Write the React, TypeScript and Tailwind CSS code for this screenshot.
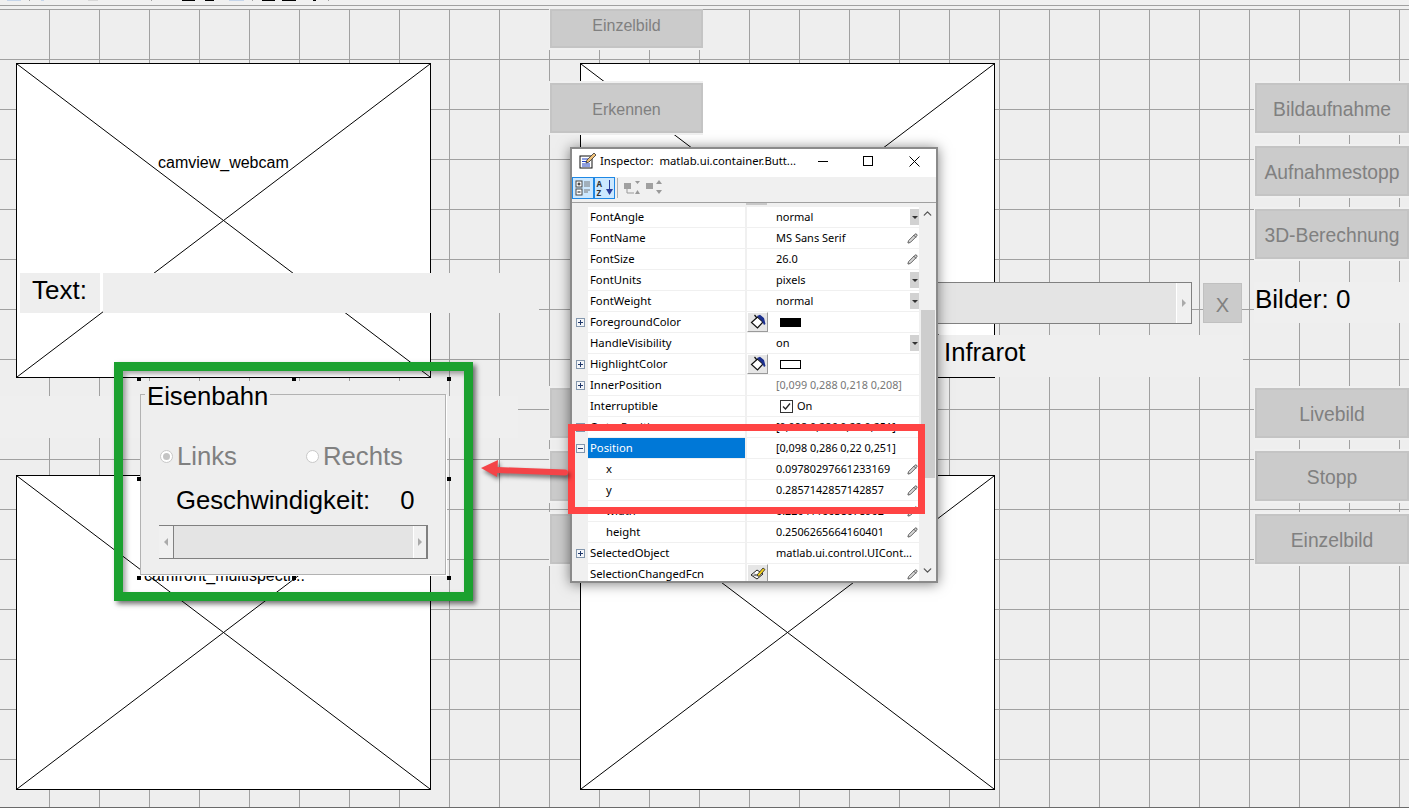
import React from "react";
import { ChevronDown, ChevronUp, Pencil } from "lucide-react";

// MATLAB GUIDE layout editor with the property inspector floating on top

const AxesBox = ({ className, label }: { className: string; label?: React.ReactNode }) => (
  <div className={`absolute w-[415px] h-[315px] bg-white border border-black ${className}`}>
    <svg className="absolute inset-0 w-full h-full" preserveAspectRatio="none" viewBox="0 0 100 100">
      <line x1="0" y1="0" x2="100" y2="100" stroke="#000" strokeWidth="1" vectorEffect="non-scaling-stroke" />
      <line x1="100" y1="0" x2="0" y2="100" stroke="#000" strokeWidth="1" vectorEffect="non-scaling-stroke" />
    </svg>
    {label}
  </div>
);

const GuideButton = ({ text, inner = "pt-[4px]", size = "text-[19.3px]" }: { text?: string; inner?: string; size?: string }) => (
  <div className="w-full h-[54px] shrink-0 bg-[#f0f0f0] py-[2px] pl-[1px]">
    <div className={`w-full h-full flex items-center justify-center bg-[#cbcbcb] border-2 border-[#c4c4c4] text-[#808080] ${size} ${inner}`}>
      {text}
    </div>
  </div>
);

const Handle = () => <div className="w-[4px] h-[4px] bg-black" />;

const ExpandBox = ({ minus }: { minus?: boolean }) => (
  <svg width="9" height="9" viewBox="0 0 9 9" className="block">
    <rect x="0.5" y="0.5" width="8" height="8" fill="#f4f6f9" stroke="#8497ad" />
    <line x1="2" y1="4.5" x2="7" y2="4.5" stroke="#20386b" />
    {!minus && <line x1="4.5" y1="2" x2="4.5" y2="7" stroke="#20386b" />}
  </svg>
);

const BucketButton = () => (
  <div className="w-[21px] h-[20px] bg-[#e6e6e6] border-t border-l border-t-white border-l-white border-r border-b border-r-[#9a9a9a] border-b-[#9a9a9a] flex items-center justify-center">
    <svg width="16" height="16" viewBox="0 0 16 16">
      <path d="M1.5 8.5 7.5 3l5.5 5-5.5 6z" fill="#fff" stroke="#111" strokeWidth="1.2" />
      <path d="M7 4 4.5 1" stroke="#111" strokeWidth="1.2" />
      <path d="M7 2 10 0.8l4 3.2 1.5 6-1.5 1-2-4z" fill="#1b2f8f" />
    </svg>
  </div>
);

const CallbackButton = () => (
  <div className="w-[21px] h-[20px] bg-[#e6e6e6] border-t border-l border-t-white border-l-white border-r border-b border-r-[#9a9a9a] border-b-[#9a9a9a] flex items-center justify-center">
    <svg width="16" height="16" viewBox="0 0 16 16">
      <path d="M1 9 7 4l6 4-6 5z" fill="#fff" stroke="#222" />
      <path d="M2.5 9 8 10M4 8l5 1.5" stroke="#555" strokeWidth="0.8" />
      <path d="M7 9 13 2l2 1.5L9 10.5z" fill="#f5d21f" stroke="#222" strokeWidth="0.8" />
    </svg>
  </div>
);

const PencilEdit = () => (
  <Pencil size={11} strokeWidth={1.8} className="absolute right-[1px] top-[5px] text-[#444]" fill="#d8d8d8" />
);

const Dropdown = () => (
  <div className="absolute right-0 top-[2px] w-[9px] h-[16px] bg-[#d2d2d2] flex items-center justify-center">
    <div className="w-0 h-0 border-x-[3px] border-x-transparent border-t-[3px] border-t-[#333]" />
  </div>
);

type Row = {
  name: string;
  value?: string;
  expand?: "plus" | "minus";
  kind?: "dropdown" | "pencil" | "color" | "muted" | "check" | "callback";
  swatch?: string;
  indent?: boolean;
  selected?: boolean;
};

const rows: Row[] = [
  { name: "FontAngle", value: "normal", kind: "dropdown" },
  { name: "FontName", value: "MS Sans Serif", kind: "pencil" },
  { name: "FontSize", value: "26.0", kind: "pencil" },
  { name: "FontUnits", value: "pixels", kind: "dropdown" },
  { name: "FontWeight", value: "normal", kind: "dropdown" },
  { name: "ForegroundColor", expand: "plus", kind: "color", swatch: "bg-black" },
  { name: "HandleVisibility", value: "on", kind: "dropdown" },
  { name: "HighlightColor", expand: "plus", kind: "color", swatch: "bg-white" },
  { name: "InnerPosition", value: "[0,099 0,288 0,218 0,208]", expand: "plus", kind: "muted" },
  { name: "Interruptible", value: "On", kind: "check" },
  { name: "OuterPosition", value: "[0,098 0,286 0,22 0,251]", expand: "plus" },
  { name: "Position", value: "[0,098 0,286 0,22 0,251]", expand: "minus", selected: true },
  { name: "x", value: "0.09780297661233169", kind: "pencil", indent: true },
  { name: "y", value: "0.2857142857142857", kind: "pencil", indent: true },
  { name: "width", value: "0.2204116638078902", kind: "pencil", indent: true },
  { name: "height", value: "0.2506265664160401", kind: "pencil", indent: true },
  { name: "SelectedObject", value: "matlab.ui.control.UICont...", expand: "plus" },
  { name: "SelectionChangedFcn", kind: "callback" },
];

const InspectorRow = ({ row }: { row: Row }) => {
  // numbers sit tighter than the rest in the reference
  const numeric = row.value ? /^[\[0]/.test(row.value) : false;
  return (
    <div className="flex h-[21px] shrink-0">
      <div className="w-[16px] shrink-0 bg-[#f0f0f0] flex items-center justify-center pl-[1px]">
        {row.expand && <ExpandBox minus={row.expand === "minus"} />}
      </div>
      <div
        className={`w-[157px] shrink-0 flex items-center border-b border-[#f0f0f0] text-[11.3px] ${
          row.selected ? "bg-[#0078d7] text-white" : "text-black"
        } ${row.indent ? "pl-[18px]" : "pl-[2px]"}`}
      >
        {row.name}
      </div>
      <div className="relative flex-1 flex items-center border-b border-l-2 border-[#f0f0f0]">
        {row.kind === "color" && (
          <>
            <BucketButton />
            <div className={`ml-[12px] w-[21px] h-[9px] border border-black ${row.swatch}`} />
          </>
        )}
        {row.kind === "callback" && <CallbackButton />}
        {row.kind === "check" && (
          <div className="ml-[33px] flex items-center gap-[4px]">
            <div className="w-[13px] h-[13px] border border-[#333] flex items-center justify-center">
              <svg width="11" height="11" viewBox="0 0 11 11">
                <path d="M2 5.5 4.5 8 9 2.5" fill="none" stroke="#222" strokeWidth="1.3" />
              </svg>
            </div>
            <span>{row.value}</span>
          </div>
        )}
        {row.value && row.kind !== "check" && (
          <span
            className={`pl-[29px] whitespace-nowrap ${numeric ? "text-[10.8px]" : "text-[11px]"} ${
              row.kind === "muted" ? "text-[#777]" : "text-black"
            }`}
          >
            {row.value}
          </span>
        )}
        {row.kind === "dropdown" && <Dropdown />}
        {(row.kind === "pencil" || row.kind === "callback") && <PencilEdit />}
      </div>
    </div>
  );
};

const Inspector = () => (
  <div className="absolute left-[570px] top-[147px] w-[368px] h-[436px] bg-white border-2 border-[#8a8a8a] flex flex-col shadow-[0_1px_12px_rgba(0,0,0,0.5)] font-['Noto_Sans','Liberation_Sans',sans-serif] text-[11px]">
    <div className="h-[28px] shrink-0 flex items-center pb-[4px]">
      <svg width="18" height="18" viewBox="0 0 18 18" className="ml-[7px]">
        <rect x="1" y="4" width="12" height="12" fill="#fff" stroke="#111" />
        <path d="M3 7h8M3 9.5h8M3 12h8M3 14h8" stroke="#1f3fc0" />
        <path d="M8 8 15 1l2 2-7 7-3 1z" fill="#f0c27a" stroke="#333" strokeWidth="0.8" />
      </svg>
      <span className="ml-[3px] text-[11.3px] text-black whitespace-pre">Inspector:  matlab.ui.container.Butt...</span>
      <div className="ml-auto flex items-center">
        <div className="w-[10px] h-px bg-black mr-[35px]" />
        <div className="w-[10px] h-[10px] border border-black mr-[36px]" />
        <svg width="11" height="11" viewBox="0 0 11 11" className="mr-[16px]">
          <path d="M.5.5l10 10M10.5.5l-10 10" stroke="#000" />
        </svg>
      </div>
    </div>
    <div className="h-[26px] shrink-0 bg-[#f0f0f0] border-b border-[#a0a0a0] flex items-center pb-[3px]">
      <div className="w-[22px] h-[22px] bg-[#cce8ff] border border-[#1e88e5] flex items-center justify-center">
        <svg width="16" height="16" viewBox="0 0 16 16">
          <rect x="1" y="1" width="6" height="6" fill="#fff" stroke="#444" />
          <rect x="1" y="9" width="6" height="6" fill="#fff" stroke="#444" />
          <path d="M2.5 4h3M4 2.5v3M2.5 12h3" stroke="#111" />
          <path d="M9 2h6M9 4h6M9 6h6M9 10h6M9 12h4" stroke="#777" />
        </svg>
      </div>
      <div className="w-[21px] h-[22px] bg-[#cce8ff] border border-[#1e88e5] flex items-center justify-center">
        <span className="relative w-[16px] h-[18px] text-[8px] leading-[9px] font-bold text-[#333]">
          A
          <br />Z
          <svg width="7" height="17" viewBox="0 0 7 17" className="absolute right-0 top-0">
            <path d="M3.5 1v11" stroke="#2a3c9c" />
            <path d="M0 10h7l-3.5 6z" fill="#2a3c9c" />
          </svg>
        </span>
      </div>
      <div className="w-px h-[20px] bg-[#b0b0b0] ml-[2px] mr-[6px]" />
      <svg width="17" height="16" viewBox="0 0 17 16">
        <rect x="0" y="3" width="7" height="6" fill="#a0a0a0" />
        <path d="M3 9v4h7" stroke="#999" fill="none" />
        <path d="M11 1h5l-2.5 3zM11 14h5l-2.5-4z" fill="#999" />
      </svg>
      <svg width="17" height="16" viewBox="0 0 17 16" className="ml-[5px]">
        <rect x="0" y="3" width="7" height="6" fill="#a0a0a0" />
        <path d="M10 4h6L13 0zM10 10h6l-3 4z" fill="#999" />
      </svg>
    </div>
    <div className="relative flex-1 flex overflow-hidden">
      <div className="w-[347px] shrink-0 flex flex-col">
        <div className="h-[4px] shrink-0 bg-[#f0f0f0]">
          <div className="ml-[174px] w-[21px] h-[2px] bg-[#c8c8c8]" />
        </div>
        {rows.map((row) => (
          <InspectorRow key={row.name} row={row} />
        ))}
      </div>
      <div className="relative flex-1 bg-[#f0f0f0] flex flex-col items-center justify-between py-[4px]">
        <ChevronUp size={13} strokeWidth={2.4} className="text-[#555]" />
        <ChevronDown size={13} strokeWidth={2.4} className="text-[#555]" />
        <div className="absolute left-[2px] right-[1px] top-[107px] h-[168px] bg-[#cdcdcd]" />
      </div>
    </div>
  </div>
);

const RadioOption = ({ text, checked }: { text: string; checked?: boolean }) => (
  <div className="flex items-center gap-[4px] text-[#808080]">
    <div className="w-[13px] h-[13px] rounded-full bg-white border border-[#c8c8c8] flex items-center justify-center">
      {checked && <div className="w-[7px] h-[7px] rounded-full bg-[#c4c4c4]" />}
    </div>
    {text}
  </div>
);

const TrainPanel = () => (
  <div className="absolute left-[140px] top-[381px] w-[307px] h-[194px] bg-[#eeeeee] text-black text-[25.7px] leading-[32px]">
    <div className="absolute left-0 right-[1px] top-[13px] bottom-0 border border-[#b2b2b2] shadow-[1px_1px_0_#fff]" />
    <div className="absolute left-[5px] top-0 px-[2px] bg-[#eeeeee] leading-[30px]">Eisenbahn</div>
    <div className="relative pt-[59px] px-[19px] flex flex-col">
      <div className="flex pl-[1px] gap-[69px]">
        <RadioOption text="Links" checked />
        <RadioOption text="Rechts" />
      </div>
      <div className="mt-[12px] pl-[17px] flex gap-[30px] whitespace-nowrap">
        <span>Geschwindigkeit:</span>
        <span>0</span>
      </div>
      <div className="mt-[9px] h-[34px] flex bg-[#e4e4e4] border-t border-b border-[#808080]">
        <div className="w-[15px] bg-[#f0f0f0] border-r border-[#808080] flex items-center justify-center">
          <div className="w-0 h-0 border-y-[4px] border-y-transparent border-r-[4px] border-r-[#aaa]" />
        </div>
        <div className="flex-1" />
        <div className="w-[15px] bg-[#f0f0f0] border-l border-white border-r-2 border-r-[#808080] flex items-center justify-center">
          <div className="w-0 h-0 border-y-[4px] border-y-transparent border-l-[4px] border-l-[#aaa]" />
        </div>
      </div>
    </div>
  </div>
);

const Tick = ({ className }: { className: string }) => <div className={`h-px ${className}`} />;

export default function App() {
  return (
    <div className="relative w-[1409px] h-[808px] overflow-hidden bg-[#f0f0f0] font-['Liberation_Sans',Arial,sans-serif]">
      {/* clipped toolbar remains */}
      <div className="relative h-[6px] border-b border-[#a0a0a0] flex items-start">
        <Tick className="ml-[7px] w-[14px] bg-[#c5d5ea]" />
        <Tick className="ml-[8px] w-px bg-[#a0a0a0]" />
        <Tick className="ml-[11px] w-[3px] bg-[#c5d5ea]" />
        <Tick className="ml-[44px] w-[10px] bg-[#d8d8d8]" />
        <Tick className="ml-[53px] w-px bg-[#a0a0a0]" />
        <Tick className="ml-[30px] w-[13px] bg-black" />
        <Tick className="ml-[10px] w-[9px] bg-black" />
        <Tick className="ml-[15px] w-[15px] bg-[#c5d5ea]" />
        <Tick className="ml-[8px] w-px bg-[#a0a0a0]" />
        <Tick className="ml-[9px] w-[13px] bg-black" />
        <Tick className="ml-[7px] w-[14px] bg-black" />
        <Tick className="ml-[17px] w-[3px] bg-black" />
        <Tick className="ml-[12px] w-px bg-[#a0a0a0]" />
      </div>

      {/* design canvas */}
      <div className="absolute left-0 right-0 top-[9px] bottom-0 bg-[#eeeeee] bg-[linear-gradient(to_right,#a0a0a0_1px,transparent_1px),linear-gradient(to_bottom,#a0a0a0_1px,transparent_1px)] bg-[size:50px_50px] bg-[position:49px_0px]" />
      <div className="absolute left-0 right-0 bottom-0 h-px bg-[#6a6a6a]" />

      <AxesBox
        className="left-[16px] top-[63px]"
        label={<div className="absolute left-[141px] top-[89px] text-[16px] leading-[20px] text-black">camview_webcam</div>}
      />
      <AxesBox className="left-[580px] top-[63px]" />
      <AxesBox
        className="left-[16px] top-[475px]"
        label={<div className="absolute left-[127px] top-[90px] text-[16px] leading-[20px] text-black whitespace-nowrap">camfront_multispectr...</div>}
      />
      <AxesBox className="left-[580px] top-[475px]" />

      {/* text row */}
      <div className="absolute left-[20px] top-[273px] flex gap-[3px] h-[40px] text-[26px] leading-[34px] text-black">
        <div className="w-[80px] bg-[#eeeeee] pl-[12px]">Text:</div>
        <div className="w-[436px] bg-[#eeeeee]" />
      </div>
      <div className="absolute left-0 top-[396px] w-[518px] h-[42px] bg-[#efefef]" />

      {/* middle button column */}
      <div className="absolute left-[549px] top-[7px] w-[154px] h-[43px] bg-[#f0f0f0] py-[2px] pl-[1px]">
        <div className="w-full h-full flex items-center justify-center pb-[6px] bg-[#cbcbcb] border-2 border-[#c4c4c4] text-[#808080] text-[16px]">Einzelbild</div>
      </div>
      <div className="absolute left-[549px] top-[81px] w-[154px]">
        <GuideButton text="Erkennen" size="text-[16px]" inner="pt-[4px]" />
      </div>
      <div className="absolute left-[549px] top-[386px] w-[154px] flex flex-col gap-[9px]">
        <GuideButton />
        <GuideButton />
        <GuideButton />
      </div>

      {/* slider and counter */}
      <div className="absolute left-[800px] top-[282px] w-[392px] h-[42px] flex justify-end bg-[#e4e4e4] border-t border-b border-r border-[#808080]">
        <div className="w-[15px] bg-[#f0f0f0] border-l border-white flex items-center justify-center">
          <div className="w-0 h-0 border-y-[4px] border-y-transparent border-l-[4px] border-l-[#aaa]" />
        </div>
      </div>
      <div className="absolute left-[1203px] top-[282px] flex items-stretch h-[41px]">
        <div className="w-[39px] mt-[1px] flex items-center justify-center pt-[3px] bg-[#cbcbcb] border border-[#c0c0c0] text-[#808080] text-[20px]">X</div>
        <div className="ml-[12px] w-[155px] bg-[#efefef] pl-[1px] text-[26px] leading-[34px] text-black">Bilder: 0</div>
      </div>
      <div className="absolute left-[938px] top-[335px] w-[305px] h-[42px] bg-[#efefef] pl-[6px] text-[25.7px] leading-[34px] text-black">Infrarot</div>

      {/* right button column */}
      <div className="absolute left-[1254px] top-[81px] w-[155px] flex flex-col gap-[9px]">
        <GuideButton text="Bildaufnahme" />
        <GuideButton text="Aufnahmestopp" />
        <GuideButton text="3D-Berechnung" />
      </div>
      <div className="absolute left-[1254px] top-[386px] w-[155px] flex flex-col gap-[9px]">
        <GuideButton text="Livebild" />
        <GuideButton text="Stopp" />
        <GuideButton text="Einzelbild" />
      </div>

      <TrainPanel />
      {/* selection handles of the panel */}
      <div className="absolute left-[137px] top-[377px] w-[314px] h-[203px] flex flex-col justify-between">
        <div className="flex justify-between">
          <Handle />
          <Handle />
          <Handle />
        </div>
        <div className="flex justify-between">
          <Handle />
          <Handle />
        </div>
        <div className="flex justify-between">
          <Handle />
          <Handle />
          <Handle />
        </div>
      </div>

      <Inspector />

      {/* screenshot annotations */}
      <div className="absolute left-[114px] top-[362px] w-[359px] h-[239px] border-[9px] border-[#1ba12f] shadow-[3px_3px_5px_rgba(0,0,0,0.55),inset_3px_3px_5px_rgba(0,0,0,0.35)]" />
      <div className="absolute left-[568px] top-[424px] w-[357px] h-[90px] border-[7px] border-[#ff4444]" />
      <svg className="absolute left-[475px] top-[455px] drop-shadow-[2px_3px_2px_rgba(0,0,0,0.5)]" width="100" height="30" viewBox="0 0 100 30">
        <path d="M6 13 23 5l-1 17z" fill="#f44448" />
        <path d="M22 15 90 17.5" stroke="#f44448" strokeWidth="6" strokeLinecap="round" />
      </svg>
    </div>
  );
}
